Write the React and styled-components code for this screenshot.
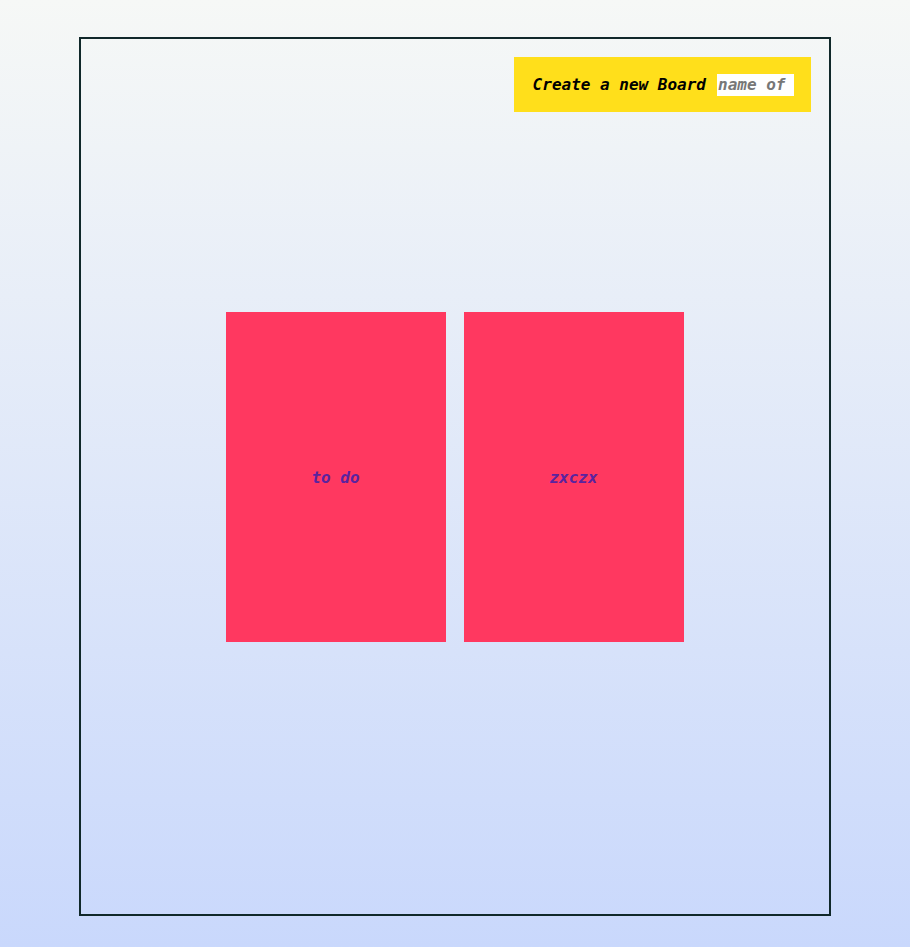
import React from "react";
import styled, { createGlobalStyle } from "styled-components";

const Global = createGlobalStyle`
  html, body { margin: 0; padding: 0; }
  body {
    min-height: 947px;
    background: linear-gradient(180deg, #f6f8f6 0%, #c9d8fc 100%);
    font-family: "DejaVu Sans Mono", monospace;
  }
`;

const Page = styled.div`
  padding: 37px 79px 31px;
  box-sizing: border-box;
  height: 947px;
  display: flex;
`;

const Frame = styled.div`
  flex: 1;
  border: 2px solid #10282a;
  display: flex;
  flex-direction: column;
  padding: 18px 18px 17px 17px;
  box-sizing: border-box;
`;

const TopBar = styled.div`
  display: flex;
  justify-content: flex-end;
  height: 55px;
`;

const CreateBox = styled.form`
  background: #ffdf1b;
  display: flex;
  align-items: center;
  height: 55px;
  padding: 0 17px 0 19px;
  box-sizing: border-box;
  font-family: "DejaVu Sans Mono", monospace;
  font-style: italic;
  font-weight: bold;
  font-size: 16px;
  color: #000;
  white-space: pre;
`;

const NameInput = styled.input`
  width: 77px;
  height: 22px;
  box-sizing: border-box;
  border: 0;
  outline: none;
  padding: 0 1px;
  margin-left: 11px;
  background: #fff;
  font-family: "DejaVu Sans Mono", monospace;
  font-style: italic;
  font-weight: bold;
  font-size: 16px;
  &::placeholder { color: #777; }
`;

const Boards = styled.div`
  flex: 1;
  display: flex;
  justify-content: center;
  align-items: center;
  gap: 18px;
  margin-top: -55px;
`;

const Board = styled.div`
  width: 220px;
  height: 330px;
  background: #ff3860;
  display: flex;
  align-items: center;
  justify-content: center;
  color: #5a239f;
  font-family: "DejaVu Sans Mono", monospace;
  font-style: italic;
  font-weight: bold;
  font-size: 16px;
`;

export default function App() {
  return (
    <>
      <Global />
      <Page>
        <Frame>
          <TopBar>
            <CreateBox onSubmit={(e) => e.preventDefault()}>
              Create a new Board
              <NameInput placeholder="name of board" />
            </CreateBox>
          </TopBar>
          <Boards>
            <Board>to do</Board>
            <Board>zxczx</Board>
          </Boards>
        </Frame>
      </Page>
    </>
  );
}
